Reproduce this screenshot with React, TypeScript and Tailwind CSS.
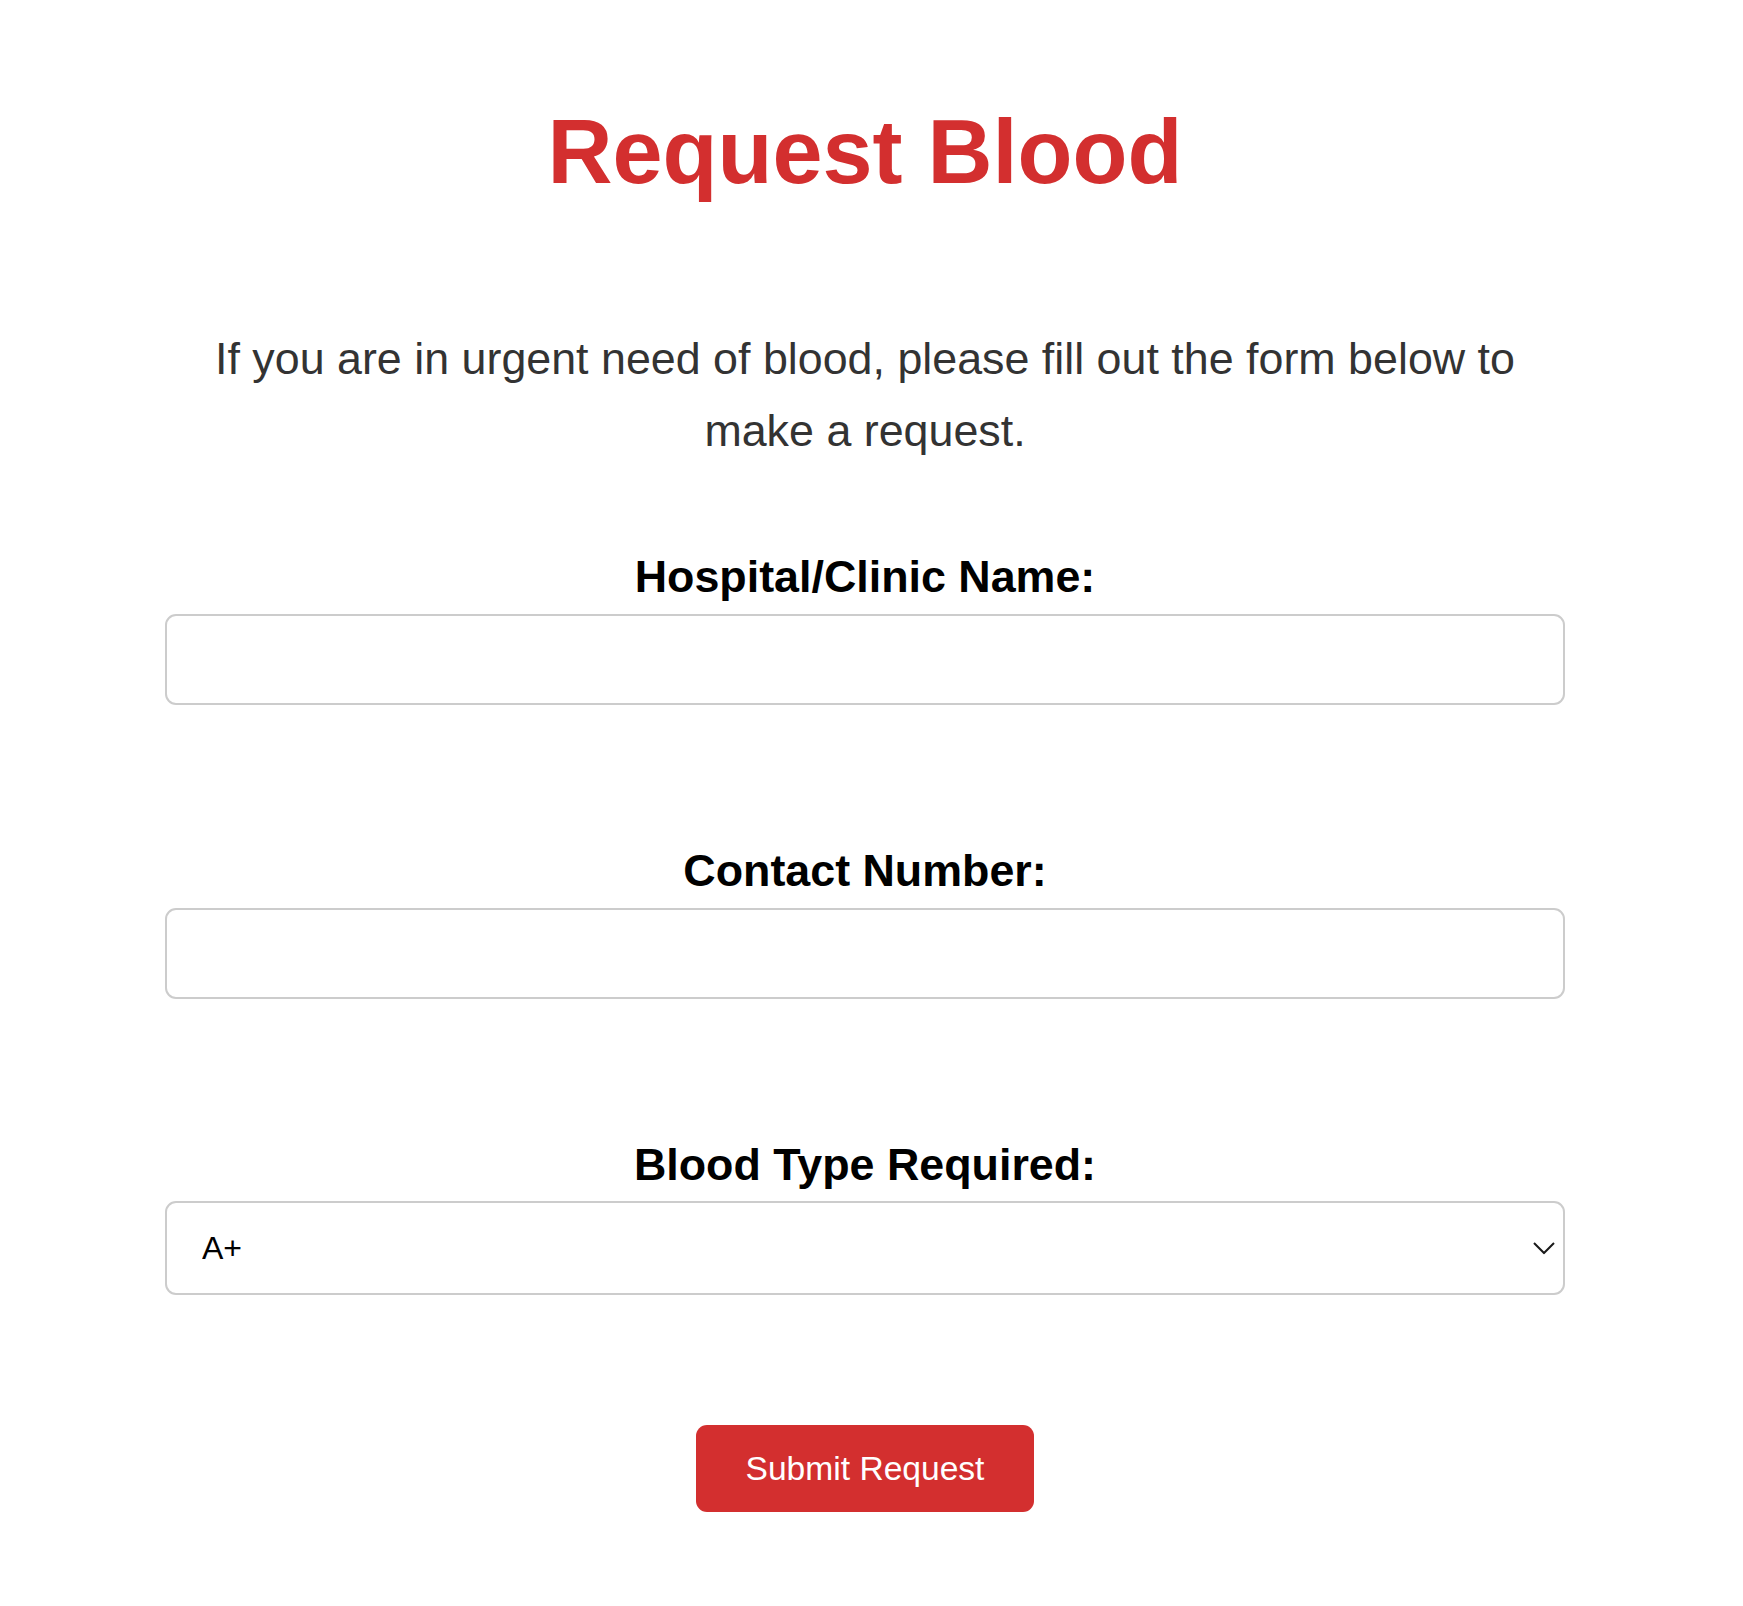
export default function App() {
  return (
    <div className="min-h-screen bg-white pr-[13px] font-['Liberation_Sans',Arial,sans-serif]">
      <div className="mx-auto w-[1400px] pt-[98px] pb-[90px]">
        {/* Heading */}
        <h1 className="text-center text-[90px] leading-[1.2] font-bold text-[#d32f2f]">
          Request Blood
        </h1>
        <p className="mt-[116px] text-center text-[44.8px] leading-[72px] text-[#333333]">
          If you are in urgent need of blood, please fill out the form below to make a request.
        </p>

        {/* Form */}
        <form className="mt-[84px] flex flex-col" onSubmit={(e) => e.preventDefault()}>
          <label className="mb-[10px] block text-center text-[44.8px] leading-[1.2] font-bold text-black">
            Hospital/Clinic Name:
          </label>
          <input
            type="text"
            className="h-[91px] w-full rounded-[11px] border-2 border-[#cccccc] bg-white px-[35px] text-[32px] outline-none"
          />

          <label className="mt-[139px] mb-[10px] block text-center text-[44.8px] leading-[1.2] font-bold text-black">
            Contact Number:
          </label>
          <input
            type="tel"
            className="h-[91px] w-full rounded-[11px] border-2 border-[#cccccc] bg-white px-[35px] text-[32px] outline-none"
          />

          <label className="mt-[139px] mb-[10px] block text-center text-[44.8px] leading-[1.2] font-bold text-black">
            Blood Type Required:
          </label>
          <div className="relative">
            <select className="h-[94px] w-full appearance-none rounded-[11px] border-2 border-[#cccccc] bg-white pl-[35px] pr-[60px] text-[32px] text-black outline-none">
              <option>A+</option>
              <option>A-</option>
              <option>B+</option>
              <option>B-</option>
              <option>AB+</option>
              <option>AB-</option>
              <option>O+</option>
              <option>O-</option>
            </select>
            <svg
              className="pointer-events-none absolute right-[10px] top-1/2 -translate-y-1/2"
              width="22"
              height="13"
              viewBox="0 0 22 13"
              fill="none"
            >
              <path d="M1 1.5 L11 11.5 L21 1.5" stroke="#1a1a1a" strokeWidth="2" />
            </svg>
          </div>

          <button
            type="submit"
            className="mt-[130px] flex h-[87px] w-[338px] items-center justify-center self-center rounded-[11px] bg-[#d32f2f] text-[33.6px] leading-[40px] text-white"
          >
            Submit Request
          </button>
        </form>
      </div>
    </div>
  );
}
